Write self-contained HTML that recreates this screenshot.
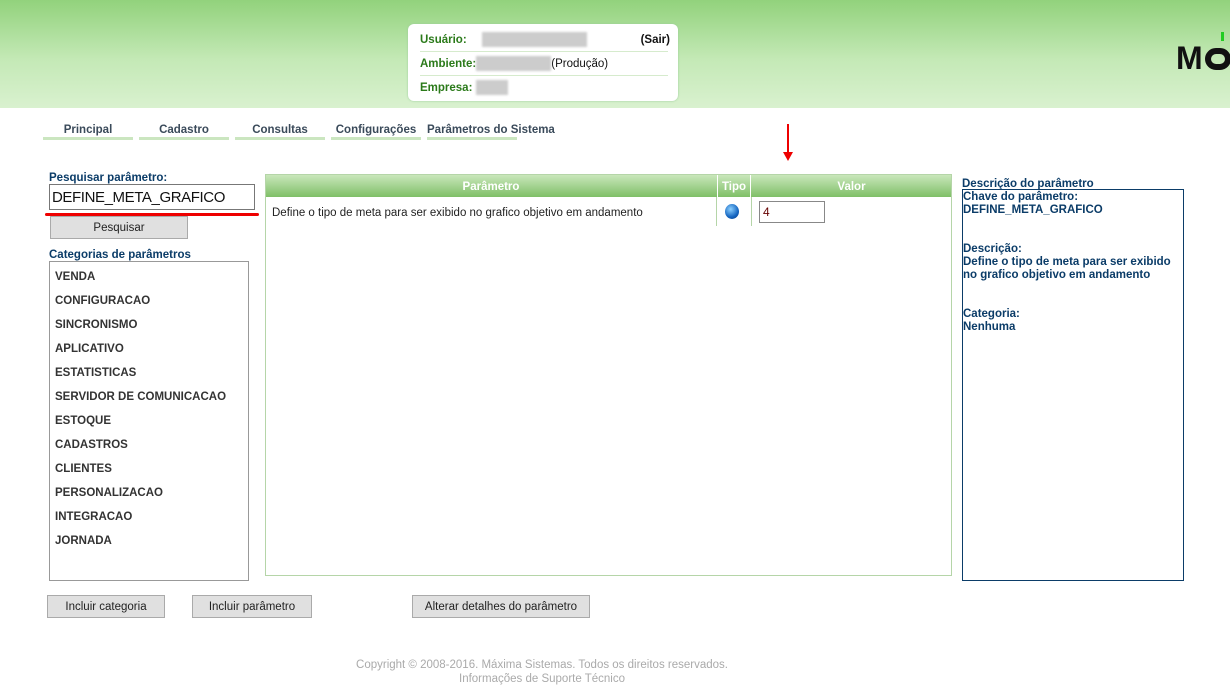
<!DOCTYPE html>
<html><head><meta charset="utf-8"><style>
*{margin:0;padding:0;box-sizing:border-box}
body{width:1230px;height:679px;overflow:hidden;background:#fff;font-family:"Liberation Sans",sans-serif;font-size:11.5px;color:#333;position:relative}
.a{position:absolute;white-space:nowrap}
.hdr{left:0;top:0;width:1230px;height:108px;background:linear-gradient(#92d27c,#c4e9b6 55%,#d9f1cf)}
.box{left:408px;top:24px;width:270px;height:77px;background:#fff;border-radius:6px;box-shadow:0 0 2px #9c9}
.box .r{position:absolute;left:12px;width:250px;height:24px;line-height:24px;font-weight:bold;color:#2b7a1a;font-size:11.5px}
.blur{display:inline-block;background:#ccc;height:15px;vertical-align:middle;filter:blur(1px)}
.nav{top:124px;font-weight:bold;color:#3a4a5a;font-size:11.5px;text-align:center;border-bottom:3px solid #cbe6c0;height:16px}
.lbl{font-weight:bold;color:#0b3c68;font-size:11.5px}
.btn{background:#e0e0e0;border:1px solid #aaa;text-align:center;line-height:23px;color:#222;font-size:11.5px}
.cat{font-weight:bold;color:#333;font-size:11.5px;height:24px;line-height:24px;padding-left:5px}
</style></head><body>
<div class="a hdr"></div>
<div class="a box">
 <div class="r" style="top:4px">Usuário: <span class="blur" style="width:105px;margin-left:12px"></span><span style="position:absolute;right:0;color:#111">(Sair)</span></div>
 <div class="a" style="left:12px;top:27px;width:248px;border-top:1px solid #d6ebcd"></div>
 <div class="r" style="top:28px">Ambiente:<span class="blur" style="width:75px"></span><span style="color:#111;font-weight:normal">(Produção)</span></div>
 <div class="a" style="left:12px;top:51px;width:248px;border-top:1px solid #d6ebcd"></div>
 <div class="r" style="top:52px">Empresa: <span class="blur" style="width:32px"></span></div>
</div>
<div class="a" style="left:1176px;top:40px;font:bold 32px 'Liberation Sans',sans-serif;color:#111">M</div>
<div class="a" style="left:1221px;top:32px;width:3px;height:9px;background:#2c2"></div>
<div class="a" style="left:1205px;top:48px;width:26px;height:22px;border:6px solid #111;border-radius:12px"></div>

<div class="a nav" style="left:43px;width:90px">Principal</div>
<div class="a nav" style="left:139px;width:90px">Cadastro</div>
<div class="a nav" style="left:235px;width:90px">Consultas</div>
<div class="a nav" style="left:331px;width:90px">Configurações</div>
<div class="a nav" style="left:427px;width:90px;text-align:left">Parâmetros do Sistema</div>

<div class="a" style="left:787px;top:124px;width:2px;height:30px;background:#e00"></div>
<div class="a" style="left:783px;top:152px;width:0;height:0;border-left:5px solid transparent;border-right:5px solid transparent;border-top:9px solid #e00"></div>

<div class="a lbl" style="left:49px;top:172px">Pesquisar parâmetro:</div>
<div class="a" style="left:49px;top:184px;width:206px;height:26px;border:1px solid #777;font:15px 'Liberation Sans',sans-serif;color:#111;line-height:25px;padding-left:2px;letter-spacing:-0.4px">DEFINE_META_GRAFICO</div>
<div class="a" style="left:45px;top:213px;width:214px;height:3px;background:#e00;border-radius:2px"></div>
<div class="a btn" style="left:50px;top:216px;width:138px;height:23px">Pesquisar</div>
<div class="a lbl" style="left:49px;top:249px">Categorias de parâmetros</div>
<div class="a" style="left:49px;top:261px;width:200px;height:320px;border:1px solid #999;padding-top:3px">
 <div class="cat">VENDA</div><div class="cat">CONFIGURACAO</div><div class="cat">SINCRONISMO</div><div class="cat">APLICATIVO</div><div class="cat">ESTATISTICAS</div><div class="cat">SERVIDOR DE COMUNICACAO</div><div class="cat">ESTOQUE</div><div class="cat">CADASTROS</div><div class="cat">CLIENTES</div><div class="cat">PERSONALIZACAO</div><div class="cat">INTEGRACAO</div><div class="cat">JORNADA</div>
</div>

<div class="a" style="left:265px;top:174px;width:687px;height:402px;border:1px solid #b5d5a8"></div>
<div class="a" style="left:266px;top:175px;width:685px;height:22px;background:linear-gradient(#c9e7bb,#7fbf67);color:#fff;font-weight:bold;line-height:24px">
 <span class="a" style="left:0;width:450px;text-align:center">Parâmetro</span>
 <span class="a" style="left:451px;width:34px;text-align:center;border-left:1px solid #fff;border-right:1px solid #fff">Tipo</span>
 <span class="a" style="left:486px;width:199px;text-align:center">Valor</span>
</div>
<div class="a" style="left:716px;top:197px;width:1px;height:29px;background:#b5d5a8"></div>
<div class="a" style="left:751px;top:197px;width:1px;height:29px;background:#b5d5a8"></div>
<div class="a" style="left:272px;top:207px;font-size:11.5px;color:#222">Define o tipo de meta para ser exibido no grafico objetivo em andamento</div>
<div class="a" style="left:725px;top:204px;width:14px;height:15px;border-radius:50%;background:radial-gradient(circle at 40% 35%,#8cd0ff,#1565c0 60%,#0a3a80)"></div>
<div class="a" style="left:759px;top:201px;width:66px;height:22px;border:1px solid #888;font-size:12px;line-height:21px;padding-left:3px;color:#600">4</div>

<div class="a lbl" style="left:962px;top:178px">Descrição do parâmetro</div>
<div class="a lbl" style="left:962px;top:189px;width:222px;height:392px;border:1px solid #0b3c68;line-height:13px;white-space:normal;padding-top:1px">
Chave do parâmetro:<br>DEFINE_META_GRAFICO<br><br><br>Descrição:<br>Define o tipo de meta para ser exibido no grafico objetivo em andamento<br><br><br>Categoria:<br>Nenhuma</div>

<div class="a btn" style="left:47px;top:595px;width:118px;height:23px">Incluir categoria</div>
<div class="a btn" style="left:192px;top:595px;width:120px;height:23px">Incluir parâmetro</div>
<div class="a btn" style="left:412px;top:595px;width:178px;height:23px">Alterar detalhes do parâmetro</div>

<div class="a" style="left:0;width:1084px;top:658px;text-align:center;color:#aaa;font-size:11.5px;line-height:14px">Copyright © 2008-2016. Máxima Sistemas. Todos os direitos reservados.<br>Informações de Suporte Técnico</div>
</body></html>
